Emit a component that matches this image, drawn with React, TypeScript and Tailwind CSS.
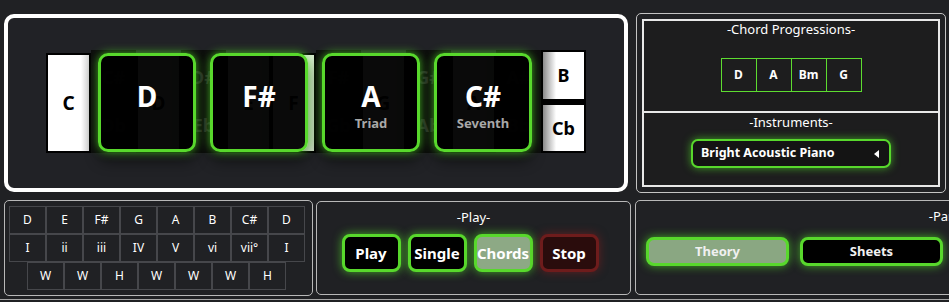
import React from "react";

type Key =
  | { kind: "white"; label: string }
  | { kind: "black"; top: string; bottom: string }
  | { kind: "stack"; top: string; bottom: string };

const keys: Key[] = [
  { kind: "white", label: "C" },
  { kind: "black", top: "C#", bottom: "Db" },
  { kind: "white", label: "D" },
  { kind: "black", top: "D#", bottom: "Eb" },
  { kind: "white", label: "E" },
  { kind: "white", label: "F" },
  { kind: "black", top: "F#", bottom: "Gb" },
  { kind: "white", label: "G" },
  { kind: "black", top: "G#", bottom: "Ab" },
  { kind: "white", label: "A" },
  { kind: "black", top: "A#", bottom: "Bb" },
  { kind: "stack", top: "B", bottom: "Cb" },
];

const cards = [
  { label: "D", sub: "" },
  { label: "F#", sub: "" },
  { label: "A", sub: "Triad" },
  { label: "C#", sub: "Seventh" },
];

function PianoKey({ k, first }: { k: Key; first: boolean }) {
  if (k.kind === "white") {
    return (
      <div
        className={`w-[45px] h-[100px] mt-[3px] border-2 border-black flex items-center justify-center text-[19px] font-bold text-black ${
          first
            ? "bg-[linear-gradient(to_right,#ffffff_80%,#d4d4d4)]"
            : "bg-[linear-gradient(to_right,#ffffff_60%,#d8e8d0)]"
        }`}
      >
        {k.label}
      </div>
    );
  }
  if (k.kind === "black") {
    return (
      <div className="w-[45px] h-[103px] bg-[#0d0d0d] flex flex-col items-center justify-between pt-[16px] pb-[17px] text-[18px] font-bold text-[#2e2e2e] leading-[22px]">
        <span>{k.top}</span>
        <span>{k.bottom}</span>
      </div>
    );
  }
  return (
    <div className="w-[45px] h-[103px] flex flex-col gap-[2px] bg-black">
      <div className="h-[51px] border-2 border-black bg-[linear-gradient(to_right,#8c8c8c,#ffffff_32%)] flex items-center justify-center text-[18px] font-bold text-black">
        {k.top}
      </div>
      <div className="h-[50px] border-2 border-black bg-[linear-gradient(to_right,#8c8c8c,#ffffff_32%)] flex items-center justify-center text-[18px] font-bold text-black">
        {k.bottom}
      </div>
    </div>
  );
}

function ChordCard({ label, sub }: { label: string; sub: string }) {
  return (
    <div className="w-[98px] h-[99px] rounded-[10px] border-[3px] border-[#58d82c] bg-[rgba(0,0,0,0.96)] shadow-[0_0_10px_rgba(80,215,40,0.8),0_10px_14px_rgba(0,0,0,0.45)] flex flex-col items-center pt-[23px]">
      <div className="text-[28px] leading-[34px] font-bold text-white">{label}</div>
      <div className="mt-[2px] text-[13px] leading-[16px] font-bold text-[#a8a8a8]">
        {sub}
      </div>
    </div>
  );
}

const scaleNotes = ["D", "E", "F#", "G", "A", "B", "C#", "D"];
const numerals = ["I", "ii", "iii", "IV", "V", "vi", "vii°", "I"];
const steps = ["W", "W", "H", "W", "W", "W", "H"];

function Cell({ t }: { t: string }) {
  return (
    <div className="w-[37px] h-[28px] shrink-0 border border-[#46474b] flex items-center justify-center text-[12px] text-white">
      {t}
    </div>
  );
}

function PlayButton({
  label,
  variant,
}: {
  label: string;
  variant: "dark" | "active" | "stop";
}) {
  const cls =
    variant === "stop"
      ? "border-[#6e1c1c] bg-[#2a0c0c] shadow-[0_0_10px_rgba(150,30,30,0.55)]"
      : variant === "active"
      ? "border-[#58d82c] bg-[#8da985] shadow-[0_0_10px_rgba(80,215,40,0.75)]"
      : "border-[#58d82c] bg-black shadow-[0_0_10px_rgba(80,215,40,0.75)]";
  return (
    <div
      className={`w-[59px] h-[38px] shrink-0 rounded-[8px] border-[3px] flex items-center justify-center text-[15px] font-bold text-white ${cls}`}
    >
      {label}
    </div>
  );
}

export default function App() {
  return (
    <div
      className="w-[949px] h-[302px] overflow-hidden bg-[#202124] text-white flex flex-col"
      style={{ fontFamily: '"Noto Sans", "Open Sans", sans-serif' }}
    >
      {/* top row */}
      <div className="h-[193px] pt-[13px] pl-[4px] flex items-start gap-[8px] shrink-0">
        <div className="mt-[1px] w-[624px] h-[178px] shrink-0 rounded-[10px] border-[4px] border-white bg-[#212226] flex items-center justify-center pb-[3px]">
          <div className="relative flex items-start">
            {keys.map((k, i) => (
              <PianoKey key={i} k={k} first={i === 0} />
            ))}
            <div className="absolute left-[52px] top-[3px] flex gap-[14px]">
              {cards.map((c) => (
                <ChordCard key={c.label} label={c.label} sub={c.sub} />
              ))}
            </div>
          </div>
        </div>

        <div className="w-[310px] h-[180px] shrink-0 rounded-[5px] border border-[#c4c4c4] p-[5px]">
          <div className="h-full border-2 border-[#e8e8e8] bg-[#1d1d1e] flex flex-col">
            <div className="h-[90px] flex flex-col items-center">
              <div className="text-[13px] leading-[16px] text-white">
                -Chord Progressions-
              </div>
              <div className="mt-[21px] flex">
                {["D", "A", "Bm", "G"].map((c, i) => (
                  <div
                    key={c}
                    className={`w-[36px] h-[34px] border border-[#5ddc30] flex items-center justify-center text-[12px] font-bold text-white ${
                      i > 0 ? "-ml-px" : ""
                    }`}
                  >
                    {c}
                  </div>
                ))}
              </div>
            </div>
            <div className="h-[2px] bg-[#e8e8e8]" />
            <div className="flex flex-col items-center">
              <div className="mt-[1px] text-[13px] leading-[16px] text-white">
                -Instruments-
              </div>
              <div className="mt-[9px] w-[200px] h-[29px] rounded-[7px] border-2 border-[#58d82c] bg-[#141414] shadow-[0_0_8px_rgba(80,215,40,0.7)] flex items-center justify-between pl-[8px] pr-[10px]">
                <span className="text-[12.5px] font-bold text-white">
                  Bright Acoustic Piano
                </span>
                <svg width="5" height="8" viewBox="0 0 5 8">
                  <polygon points="5,0 5,8 0,4" fill="#ffffff" />
                </svg>
              </div>
            </div>
          </div>
        </div>
      </div>

      {/* bottom row */}
      <div className="mt-[7px] flex items-start shrink-0">
        <div className="ml-[4px] w-[309px] h-[96px] shrink-0 rounded-[5px] border border-[#b8b8b8] px-[4px] pt-[5px] flex flex-col">
          <div className="flex">
            {scaleNotes.map((t, i) => (
              <Cell key={i} t={t} />
            ))}
          </div>
          <div className="flex">
            {numerals.map((t, i) => (
              <Cell key={i} t={t} />
            ))}
          </div>
          <div className="flex pl-[18px]">
            {steps.map((t, i) => (
              <Cell key={i} t={t} />
            ))}
          </div>
        </div>

        <div className="ml-[3px] mt-[1px] w-[315px] h-[94px] shrink-0 rounded-[5px] border border-[#b8b8b8] flex flex-col items-center pt-[7px]">
          <div className="text-[13px] leading-[16px] text-white">-Play-</div>
          <div className="mt-[9px] flex gap-[7px] pr-[7px]">
            <PlayButton label="Play" variant="dark" />
            <PlayButton label="Single" variant="dark" />
            <PlayButton label="Chords" variant="active" />
            <PlayButton label="Stop" variant="stop" />
          </div>
        </div>

        <div className="ml-[4px] w-[636px] shrink-0 h-[95px] rounded-[5px] border border-[#b8b8b8] flex flex-col pt-[7px]">
          <div className="text-center text-[13px] leading-[16px] text-white">
            -Panels-
          </div>
          <div className="mt-[13px] flex gap-[11px] pl-[10px]">
            <div className="w-[143px] h-[29px] rounded-[8px] border-[3px] border-[#58d82c] bg-[#8aa782] shadow-[0_0_10px_rgba(80,215,40,0.75)] flex items-center justify-center text-[13px] font-bold text-[#f0f0f0]">
              Theory
            </div>
            <div className="w-[143px] h-[29px] rounded-[8px] border-[3px] border-[#58d82c] bg-black shadow-[0_0_10px_rgba(80,215,40,0.75)] flex items-center justify-center text-[13px] font-bold text-[#f0f0f0]">
              Sheets
            </div>
          </div>
        </div>
      </div>

      <div className="mt-[3px] w-full border-t border-[#a8a8a8] shrink-0" />
    </div>
  );
}
